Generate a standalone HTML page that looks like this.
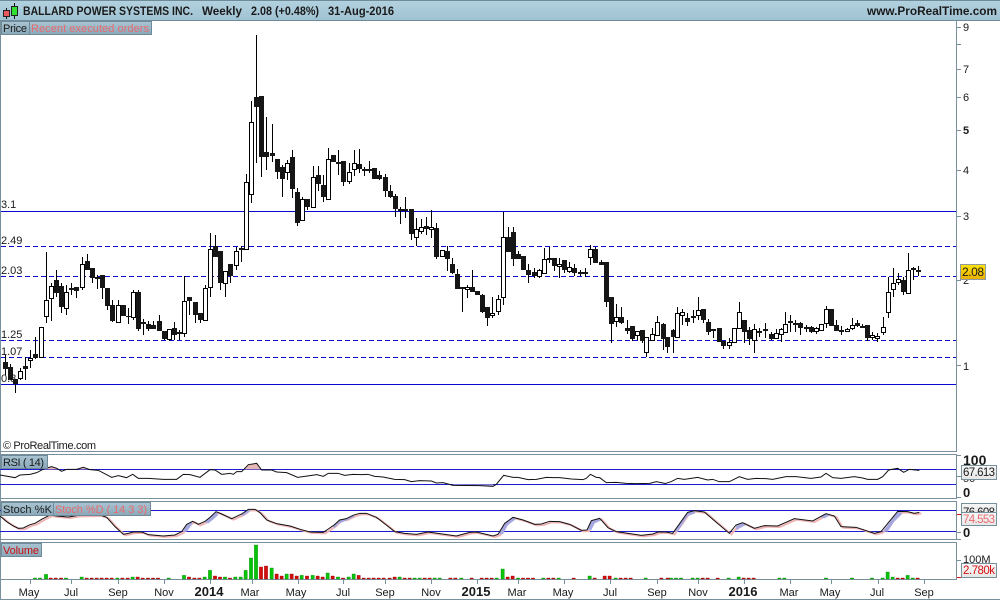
<!DOCTYPE html>
<html><head><meta charset="utf-8"><title>Chart</title>
<style>
html,body{margin:0;padding:0;background:#fff;width:1000px;height:600px;overflow:hidden}
svg{display:block;font-family:"Liberation Sans",sans-serif}
text{fill:#1a1a1a;font-size:11px}
.b{font-weight:bold}
.ln{vector-effect:non-scaling-stroke;fill:none}
</style></head><body>
<svg width="1000" height="600" viewBox="0 0 1000 600" xmlns="http://www.w3.org/2000/svg">
<defs>
<linearGradient id="h" x1="0" y1="0" x2="0" y2="1"><stop offset="0" stop-color="#b4d2e0"/><stop offset="1" stop-color="#9fc2d2"/></linearGradient>
<linearGradient id="l" x1="0" y1="0" x2="0" y2="1"><stop offset="0" stop-color="#a9c4d2"/><stop offset="1" stop-color="#8aa8b8"/></linearGradient>
<linearGradient id="y" x1="0" y1="0" x2="0" y2="1"><stop offset="0" stop-color="#ffe30a"/><stop offset="1" stop-color="#e8ae00"/></linearGradient>
<linearGradient id="g" x1="0" y1="0" x2="0" y2="1"><stop offset="0" stop-color="#f8f8f8"/><stop offset="1" stop-color="#e6e6e6"/></linearGradient>
</defs>
<rect width="1000" height="600" fill="#fff"/>
<!-- header -->
<rect x="0" y="0" width="1000" height="20" fill="url(#h)"/>
<path d="M0 .5H1000M0 20.5H1000" stroke="#6f8b9a"/>
<path d="M6.5 8V19" stroke="#111"/><rect x="3.5" y="10.5" width="6" height="6" fill="#e8585c" stroke="#222"/>
<path d="M14.5 3V19" stroke="#111"/><rect x="11.5" y="6.5" width="6" height="9" fill="#30e030" stroke="#222"/>
<text x="23" y="15" class="b" style="font-size:12px" textLength="170" lengthAdjust="spacingAndGlyphs">BALLARD POWER SYSTEMS INC.</text>
<text x="202" y="15" class="b" style="font-size:12px" textLength="40" lengthAdjust="spacingAndGlyphs">Weekly</text>
<text x="251" y="15" class="b" style="font-size:12px" textLength="68" lengthAdjust="spacingAndGlyphs">2.08 (+0.48%)</text>
<text x="328" y="15" class="b" style="font-size:12px" textLength="66" lengthAdjust="spacingAndGlyphs">31-Aug-2016</text>
<text x="867" y="15" class="b" style="font-size:12px" textLength="130" lengthAdjust="spacingAndGlyphs">www.ProRealTime.com</text>

<!-- panels -->
<g fill="none" stroke="#78909c">
<path d="M.5 20V599.5H1000"/>
<path d="M956.5 20V451.5H0M0 454.5H956.5V498.5H0M0 501.5H956.5V539.5H0M0 542.5H956.5V579.5H0"/>
<path d="M957 27.5h4M957 44.5h4M957 69.5h4M957 97.5h4M957 130.5h4M957 170.5h4M957 216.5h4M957 280.5h4M957 365.5h4M957 455.5h4M957 476.5h4M957 497.5h4M957 532.5h4M957 539.5h4M957 560.5h4"/>
<path d="M30.5 579v5M71.5 579v5M118.5 579v5M164.5 579v5M210.5 579v5M252.5 579v5M298.5 579v5M343.5 579v5M385.5 579v5M431.5 579v5M477.5 579v5M518.5 579v5M564.5 579v5M610.5 579v5M657.5 579v5M698.5 579v5M744.5 579v5M790.5 579v5M831.5 579v5M878.5 579v5M924.5 579v5"/>
</g>

<!-- horizontal levels -->
<path d="M1 211.5H956M1 384.5H956" stroke="#0808d0" fill="none"/>
<path d="M1 246.5H956M1 276.5H956M1 340.5H956M1 357.5H956" stroke="#0808d0" stroke-dasharray="5 3" fill="none"/>
<text x="1" y="208">3.1</text><text x="1" y="244">2.49</text><text x="1" y="274">2.03</text><text x="1" y="338">1.25</text><text x="1" y="355">1.07</text><text x="1" y="382">0.8</text>

<!-- wicks -->
<path fill="none" stroke="#000" d="M5.5 355V375M10.5 364V380M15.5 379V393M20.5 368V380M25.5 357V380M30.5 350V368M35.5 337V359M41.5 327V357M46.5 252V323M51.5 283V321M56.5 270V297M61.5 283V313M66.5 285V315M71.5 283V295M76.5 287V298M82.5 257V290M87.5 254V270M92.5 268V283M97.5 275V289M102.5 275V299M107.5 288V310M112.5 300V322M118.5 300V322M123.5 305V316M128.5 308V324M133.5 290V320M138.5 290V331M143.5 319V335M148.5 321V331M153.5 321V329M159.5 315V331M164.5 331V340M169.5 329V341M174.5 322V340M179.5 330V340M184.5 276V337M189.5 297V315M195.5 302V323M200.5 313V323M205.5 285V320M210.5 233V297M215.5 235V257M220.5 251V290M225.5 271V297M230.5 264V283M236.5 247V270M241.5 246V262M246.5 174V249M251.5 101V203M256.5 35V163M261.5 96V177M266.5 117V170M272.5 124V162M277.5 159V179M282.5 165V197M287.5 160V180M292.5 150V198M297.5 188V226M302.5 197V220M307.5 199V210M313.5 166V207M318.5 166V191M323.5 175V202M328.5 148V199M333.5 155V162M338.5 150V175M343.5 161V186M349.5 163V184M354.5 150V176M359.5 149V173M364.5 167V176M369.5 161V173M374.5 168V179M379.5 171V180M385.5 174V197M390.5 185V198M395.5 194V217M400.5 207V224M405.5 197V218M411.5 209V240M416.5 218V246M421.5 219V234M426.5 217V235M431.5 210V238M436.5 223V259M442.5 250V257M447.5 246V271M452.5 258V274M457.5 269V289M462.5 287V312M467.5 285V298M472.5 270V292M477.5 291V295M482.5 294V313M487.5 307V326M492.5 297V318M498.5 295V315M503.5 212V305M508.5 227V252M513.5 227V266M518.5 251V259M523.5 256V270M528.5 264V283M534.5 268V278M539.5 269V278M544.5 248V273M549.5 247V263M554.5 258V271M559.5 258V278M564.5 260V273M569.5 262V273M574.5 264V276M580.5 270V276M585.5 268V277M590.5 245V265M595.5 247V263M601.5 260V265M606.5 262V307M611.5 297V343M616.5 304V327M621.5 307V324M627.5 320V334M632.5 326V341M637.5 331V340M642.5 330V343M646.5 337V357M652.5 328V340M657.5 316V335M663.5 323V350M667.5 337V353M673.5 329V353M677.5 307V337M682.5 309V325M687.5 313V326M693.5 310V323M698.5 297V320M703.5 309V323M708.5 319V335M713.5 329V338M719.5 328V342M723.5 341V349M729.5 338V349M734.5 328V342M739.5 302V328M744.5 320V343M749.5 327V345M754.5 324V353M759.5 328V337M765.5 323V338M771.5 332V340M776.5 329V338M781.5 328V342M785.5 312V332M790.5 315V332M795.5 320V332M800.5 322V335M806.5 325V332M811.5 326V333M816.5 327V334M821.5 324V330M826.5 306V328M831.5 309V326M836.5 320V331M841.5 326V335M847.5 328V332M852.5 318V330M857.5 320V327M862.5 324V328M867.5 325V341M872.5 332V340M877.5 333V342M883.5 317V335M888.5 277V318M893.5 268V297M898.5 273V285M903.5 277V295M908.5 253V293M913.5 267V280M918.5 266V276"/>

<!-- black bodies -->
<path fill="none" stroke="#161616" stroke-width="5" d="M5.5 362V369M10.5 367V380M15.5 379V384M25.5 366V369M35.5 354V358M56.5 280V293M61.5 286V307M71.5 288V290M76.5 287V291M87.5 261V270M92.5 268V278M97.5 277V279M102.5 275V288M107.5 288V306M112.5 305V321M123.5 305V316M128.5 316V317M138.5 292V329M143.5 322V324M148.5 324V329M153.5 325V329M159.5 321V331M164.5 331V339M174.5 328V335M179.5 332V334M189.5 297V301M195.5 302V315M200.5 313V320M215.5 246V257M220.5 251V283M230.5 264V276M241.5 248V250M256.5 97V107M261.5 96V157M266.5 152V157M272.5 153V156M277.5 159V172M282.5 167V179M292.5 157V189M297.5 192V223M307.5 199V207M318.5 175V184M323.5 185V197M333.5 155V162M338.5 162V164M343.5 161V182M359.5 164V169M364.5 169V171M369.5 169V171M374.5 168V179M379.5 175V179M385.5 177V191M390.5 191V197M395.5 196V209M400.5 209V211M405.5 209V211M411.5 209V234M426.5 226V229M436.5 228V257M447.5 251V259M452.5 264V273M457.5 274V289M462.5 287V289M472.5 287V292M477.5 291V295M482.5 295V312M487.5 307V318M508.5 237V252M513.5 232V259M518.5 254V259M523.5 256V270M528.5 270V275M534.5 272V276M549.5 258V260M554.5 258V266M564.5 260V270M574.5 268V273M580.5 272V274M585.5 272V274M595.5 249V263M601.5 262V265M606.5 262V302M611.5 297V324M621.5 317V323M627.5 328V331M632.5 326V339M642.5 330V341M663.5 324V339M667.5 337V347M673.5 330V337M687.5 318V322M693.5 316V318M703.5 309V320M708.5 322V332M713.5 329V331M719.5 328V342M723.5 341V346M744.5 320V332M749.5 330V339M759.5 331V333M765.5 329V331M771.5 334V339M790.5 321V323M795.5 323V325M800.5 323V328M806.5 327V329M811.5 327V332M831.5 309V326M836.5 325V331M841.5 330V332M857.5 323V326M862.5 326V328M867.5 325V338M903.5 280V292M913.5 268V270M918.5 270V272"/>

<!-- white bodies -->
<g transform="translate(.5,.5)">
<path fill="#fff" stroke="#000" d="M18 371h4v7h-4zM28 358h4v2h-4zM39 327h4v30h-4zM44 300h4v16h-4zM49 286h4v12h-4zM64 292h4v16h-4zM80 264h4v23h-4zM116 305h4v17h-4zM131 292h4v25h-4zM167 329h4v10h-4zM182 301h4v32h-4zM203 288h4v32h-4zM208 249h4v38h-4zM223 271h4v12h-4zM234 251h4v14h-4zM244 182h4v67h-4zM249 122h4v72h-4zM285 163h4v9h-4zM300 199h4v21h-4zM311 177h4v30h-4zM326 159h4v40h-4zM347 172h4v9h-4zM352 163h4v6h-4zM414 229h4v8h-4zM419 227h4v4h-4zM429 227h4v2h-4zM440 250h4v6h-4zM465 287h4v2h-4zM490 313h4v2h-4zM496 299h4v12h-4zM501 237h4v60h-4zM537 270h4v6h-4zM542 259h4v14h-4zM557 264h4v2h-4zM567 267h4v4h-4zM588 249h4v8h-4zM614 317h4v4h-4zM635 331h4v4h-4zM644 337h4v15h-4zM650 334h4v6h-4zM655 322h4v13h-4zM675 313h4v24h-4zM680 312h4v3h-4zM696 310h4v5h-4zM727 342h4v3h-4zM732 328h4v14h-4zM737 312h4v16h-4zM752 329h4v11h-4zM774 333h4v5h-4zM779 329h4v5h-4zM783 324h4v8h-4zM814 328h4v3h-4zM819 324h4v6h-4zM824 309h4v14h-4zM845 329h4v2h-4zM850 325h4v3h-4zM870 335h4v2h-4zM875 336h4v2h-4zM881 327h4v5h-4zM886 292h4v20h-4zM891 283h4v6h-4zM896 279h4v3h-4zM906 270h4v23h-4z"/>
</g>

<!-- main labels -->
<rect x="1.5" y="21.5" width="28" height="13" fill="url(#l)" stroke="#6f8b9a"/>
<rect x="29.5" y="21.5" width="122" height="13" fill="url(#l)" stroke="#6f8b9a"/>
<text x="3" y="32" textLength="24">Price</text>
<text x="31" y="32" textLength="118" style="fill:#e86a6e">Recent executed orders</text>
<text x="3" y="449" textLength="93">© ProRealTime.com</text>

<!-- axis labels -->
<text x="963" y="31">9</text><text x="963" y="73">7</text><text x="963" y="101">6</text><text x="963" y="134" class="b">5</text><text x="963" y="174">4</text><text x="963" y="220">3</text><text x="963" y="284">2</text><text x="963" y="370">1</text>
<rect x="960.5" y="264.5" width="25" height="15" fill="url(#y)" stroke="#8f9aa0"/>
<text x="962" y="276" style="font-size:12px" textLength="22">2.08</text>

<!-- RSI -->
<path d="M0 469.5H956M0 484.5H956" stroke="#1c1cd0" fill="none"/>
<g transform="translate(0,430) scale(.33333)">
<path fill="#e6b8b8" d="M125 118L135 115L155 110L170 115L178 118zM235 118L250 112L270 118zM730 118L745 104L770 100L785 118z"/>
<polyline class="ln" stroke="#111" stroke-width="1" points="0,135 45,143 60,135 90,133 110,128 135,115 155,110 170,115 185,124 200,118 230,118 250,112 270,119 295,121 335,142 355,137 380,143 398,133 415,145 445,145 490,148 530,148 550,133 570,134 600,142 630,119 645,120 665,133 690,130 700,133 710,125 725,125 745,104 770,100 785,120 815,120 830,126 860,128 893,142 930,137 950,134 970,139 985,130 999,130"/>
</g>
<g transform="translate(333,430) scale(.33333)">
<path fill="#a8a8e0" d="M360 163L440 163L480 163L478 169L440 167L360 166z"/>
<polyline class="ln" stroke="#111" stroke-width="1" points="0,130 15,130 35,136 60,133 85,134 105,133 125,139 150,141 185,148 215,149 235,155 260,152 295,153 310,159 330,158 360,166 440,167 480,169 490,163 512,136 540,142 555,142 585,149 610,148 640,142 660,143 680,143 715,147 750,149 760,145 772,133 790,142 800,143 820,158 850,157 880,160 910,161 950,160 970,155 999,161"/>
</g>
<g transform="translate(666,430) scale(.33333)">
<polyline class="ln" stroke="#111" stroke-width="1" points="0,160 15,155 35,145 55,148 95,142 125,150 140,148 160,155 190,155 220,140 245,148 270,145 300,146 320,148 360,140 390,140 435,145 465,141 480,130 500,143 525,145 565,140 590,144 605,148 635,148 650,140 668,120 695,115 713,127 730,118 760,121"/>
</g>
<rect x="1.5" y="455.5" width="46" height="13" fill="url(#l)" stroke="#6f8b9a"/>
<text x="3" y="466" textLength="41">RSI ( 14)</text>

<!-- Stoch -->
<path d="M0 510.5H956M0 531.5H956" stroke="#1c1cd0" fill="none"/>
<g transform="translate(0,430) scale(.33333)">
<polyline class="ln" transform="translate(6,3)" stroke="#f0b4b4" stroke-width="2" points="0,258 20,275 40,288 55,295 70,294 90,284 105,280 125,268 150,255 170,258 205,261 235,256 300,255 320,262 345,290 370,313 385,310 400,306 425,306 445,314 490,318 525,315 545,305 560,283 578,274 595,283 615,274 630,262 648,245 665,252 695,266 725,252 745,238 765,238 780,248 800,270 830,281 870,288 900,298 930,306 970,307 985,297 999,287"/>
<path fill="#a8a8e0" d="M548 305L560 283L578 274L575 285L560 305zM615 276L630 262L648 245L655 255L640 268L625 280zM722 255L745 238L752 242L730 258z"/>
<polyline class="ln" stroke="#111" stroke-width="1" points="0,258 20,275 40,288 55,295 70,294 90,284 105,280 125,268 150,255 170,258 205,261 235,256 300,255 320,262 345,290 370,313 385,310 400,306 425,306 445,314 490,318 525,315 545,305 560,283 578,274 595,283 615,274 630,262 648,245 665,252 695,266 725,252 745,238 765,238 780,248 800,270 830,281 870,288 900,298 930,306 970,307 985,297 999,287"/>
</g>
<g transform="translate(333,430) scale(.33333)">
<polyline class="ln" transform="translate(6,3)" stroke="#f0b4b4" stroke-width="2" points="0,288 20,270 40,266 60,256 80,250 100,250 130,262 160,285 185,305 215,310 250,313 285,306 320,311 370,318 410,307 430,306 480,318 495,313 515,280 540,262 570,270 605,283 625,282 650,274 680,275 710,283 745,301 762,300 775,272 800,265 825,293 850,305 885,310 925,316 960,312 975,306 999,306"/>
<path fill="#a8a8e0" d="M0 288L20 270L40 266L60 256L65 260L40 272L15 282L5 295zM497 313L515 280L540 262L548 268L525 285L510 312zM764 300L775 272L800 265L803 272L785 280L775 300z"/>
<polyline class="ln" stroke="#111" stroke-width="1" points="0,288 20,270 40,266 60,256 80,250 100,250 130,262 160,285 185,305 215,310 250,313 285,306 320,311 370,318 410,307 430,306 480,318 495,313 515,280 540,262 570,270 605,283 625,282 650,274 680,275 710,283 745,301 762,300 775,272 800,265 825,293 850,305 885,310 925,316 960,312 975,306 999,306"/>
</g>
<g transform="translate(666,430) scale(.33333)">
<polyline class="ln" transform="translate(6,3)" stroke="#f0b4b4" stroke-width="2" points="0,306 20,310 45,275 65,247 85,242 115,246 145,272 190,310 210,285 230,278 265,295 295,287 335,288 385,266 440,273 480,251 505,258 525,290 570,292 625,310 645,305 695,244 725,245 745,250 760,247"/>
<path fill="#a8a8e0" d="M25 305L45 275L65 247L85 243L88 250L65 258L45 290L35 305zM210 287L230 278L240 285L220 295L212 302zM460 260L480 251L495 255L475 265zM650 305L695 245L710 250L685 275L665 305z"/>
<polyline class="ln" stroke="#111" stroke-width="1" points="0,306 20,310 45,275 65,247 85,242 115,246 145,272 190,310 210,285 230,278 265,295 295,287 335,288 385,266 440,273 480,251 505,258 525,290 570,292 625,310 645,305 695,244 725,245 745,250 760,247"/>
</g>
<rect x="1.5" y="502.5" width="52" height="13" fill="url(#l)" stroke="#6f8b9a"/>
<rect x="53.5" y="502.5" width="97" height="13" fill="url(#l)" stroke="#6f8b9a"/>
<text x="3" y="513" textLength="49">Stoch %K</text>
<text x="55" y="513" textLength="92" style="fill:#e86a6e">Stoch %D ( 14 3 3)</text>

<!-- Volume -->
<g transform="translate(0,430) scale(.33333)">
<path fill="#06c406" stroke="#058005" stroke-width="1" d="M100 444h10V447h-10zM115 444h10V447h-10zM133 433h10V447h-10zM193 444h10V447h-10zM240 441h10V447h-10zM347 444h10V447h-10zM393 441h10V447h-10zM501 444h10V447h-10zM547 436h10V447h-10zM609 441h10V447h-10zM625 421h10V447h-10zM670 441h10V447h-10zM701 441h10V447h-10zM717 441h10V447h-10zM732 421h10V447h-10zM748 384h10V447h-10zM763 345h10V447h-10zM810 414h10V447h-10zM855 432h10V447h-10zM900 436h10V447h-10zM933 436h10V447h-10zM978 429h10V447h-10z"/>
<path fill="#d40c0c" stroke="#8c0606" stroke-width="1" d="M147 444h10V447h-10zM162 444h10V447h-10zM178 444h10V447h-10zM255 444h10V447h-10zM270 444h10V447h-10zM285 444h10V447h-10zM300 444h10V447h-10zM315 444h10V447h-10zM330 444h10V447h-10zM362 444h10V447h-10zM378 444h10V447h-10zM408 441h10V447h-10zM423 444h10V447h-10zM439 444h10V447h-10zM454 444h10V447h-10zM469 444h10V447h-10zM562 441h10V447h-10zM578 444h10V447h-10zM593 444h10V447h-10zM640 438h10V447h-10zM655 441h10V447h-10zM685 444h10V447h-10zM778 411h10V447h-10zM793 408h10V447h-10zM825 432h10V447h-10zM840 438h10V447h-10zM870 432h10V447h-10zM885 438h10V447h-10zM916 438h10V447h-10zM948 438h10V447h-10zM963 441h10V447h-10zM993 438h10V447h-10z"/>
</g>
<g transform="translate(333,430) scale(.33333)">
<path fill="#06c406" stroke="#058005" stroke-width="1" d="M10 441h10V447h-10zM42 441h10V447h-10zM57 432h10V447h-10zM195 441h10V447h-10zM240 444h10V447h-10zM255 444h10V447h-10zM300 444h10V447h-10zM315 444h10V447h-10zM380 444h10V447h-10zM486 444h10V447h-10zM504 417h10V447h-10zM550 444h10V447h-10zM626 444h10V447h-10zM672 444h10V447h-10zM765 438h10V447h-10zM843 444h10V447h-10zM933 444h10V447h-10z"/>
<path fill="#d40c0c" stroke="#8c0606" stroke-width="1" d="M25 444h10V447h-10zM72 436h10V447h-10zM87 444h10V447h-10zM102 444h10V447h-10zM117 444h10V447h-10zM132 444h10V447h-10zM147 444h10V447h-10zM165 444h10V447h-10zM180 441h10V447h-10zM210 444h10V447h-10zM225 444h10V447h-10zM270 444h10V447h-10zM285 444h10V447h-10zM347 444h10V447h-10zM362 444h10V447h-10zM411 444h10V447h-10zM441 444h10V447h-10zM456 444h10V447h-10zM471 444h10V447h-10zM519 441h10V447h-10zM534 438h10V447h-10zM565 444h10V447h-10zM580 444h10V447h-10zM595 444h10V447h-10zM641 444h10V447h-10zM656 444h10V447h-10zM717 444h10V447h-10zM780 444h10V447h-10zM810 438h10V447h-10zM825 438h10V447h-10zM858 444h10V447h-10zM873 444h10V447h-10zM888 444h10V447h-10zM980 444h10V447h-10z"/>
</g>
<g transform="translate(666,430) scale(.33333)">
<path fill="#06c406" stroke="#058005" stroke-width="1" d="M10 444h10V447h-10zM25 444h10V447h-10zM40 444h10V447h-10zM75 444h10V447h-10zM90 444h10V447h-10zM183 444h10V447h-10zM213 441h10V447h-10zM335 444h10V447h-10zM350 444h10V447h-10zM475 444h10V447h-10zM553 444h10V447h-10zM613 444h10V447h-10zM645 444h10V447h-10zM660 426h10V447h-10zM675 441h10V447h-10zM720 436h10V447h-10zM735 444h10V447h-10z"/>
<path fill="#d40c0c" stroke="#8c0606" stroke-width="1" d="M0 444h10V447h-10zM105 444h10V447h-10zM120 444h10V447h-10zM150 444h10V447h-10zM228 444h10V447h-10zM243 444h10V447h-10zM258 444h10V447h-10zM690 444h10V447h-10zM705 444h10V447h-10zM750 444h10V447h-10z"/>
</g>
<rect x="1.5" y="543.5" width="40" height="13" fill="url(#l)" stroke="#6f8b9a"/>
<text x="3" y="554" textLength="36" style="fill:#c81010">Volume</text>

<!-- right indicator labels -->
<text x="963" y="465" class="b" style="font-size:14px">100</text>
<text x="963" y="482">50</text>
<text x="963" y="497" class="b" style="font-size:13px">0</text>
<rect x="961.5" y="465.5" width="35" height="14" fill="url(#g)" stroke="#78909c"/>
<text x="963" y="476" textLength="32" style="font-size:11.5px">67.613</text>
<rect x="961.5" y="503.5" width="35" height="10" fill="url(#g)" stroke="#78909c"/>
<svg x="961" y="504" width="36" height="9"><text x="2" y="12" style="font-size:11.5px" textLength="32">76.608</text></svg>
<rect x="961.5" y="512.5" width="35" height="13" fill="url(#g)" stroke="#78909c"/>
<text x="963" y="523" textLength="32" style="font-size:11.5px;fill:#e86a6e">74.553</text>
<text x="963" y="537" class="b" style="font-size:13px">0</text>
<text x="963" y="563">100M</text>
<rect x="961.5" y="563.5" width="35" height="14" fill="url(#g)" stroke="#78909c"/>
<text x="963" y="574" textLength="32" style="font-size:11.5px;fill:#d81010">2.780k</text>
<path d="M957 514.5h4M957 577.5h4" stroke="#d81010"/>

<!-- bottom axis labels -->
<g text-anchor="middle">
<text x="29" y="596">May</text><text x="71" y="596">Jul</text><text x="118" y="596">Sep</text><text x="164" y="596">Nov</text><text x="209" y="596" class="b" style="font-size:13px">2014</text><text x="250" y="596">Mar</text><text x="296" y="596">May</text><text x="343" y="596">Jul</text><text x="385" y="596">Sep</text><text x="431" y="596">Nov</text><text x="476" y="596" class="b" style="font-size:13px">2015</text><text x="517" y="596">Mar</text><text x="563" y="596">May</text><text x="610" y="596">Jul</text><text x="657" y="596">Sep</text><text x="698" y="596">Nov</text><text x="743" y="596" class="b" style="font-size:13px">2016</text><text x="789" y="596">Mar</text><text x="830" y="596">May</text><text x="877" y="596">Jul</text><text x="924" y="596">Sep</text>
</g>
</svg>
</body></html>
